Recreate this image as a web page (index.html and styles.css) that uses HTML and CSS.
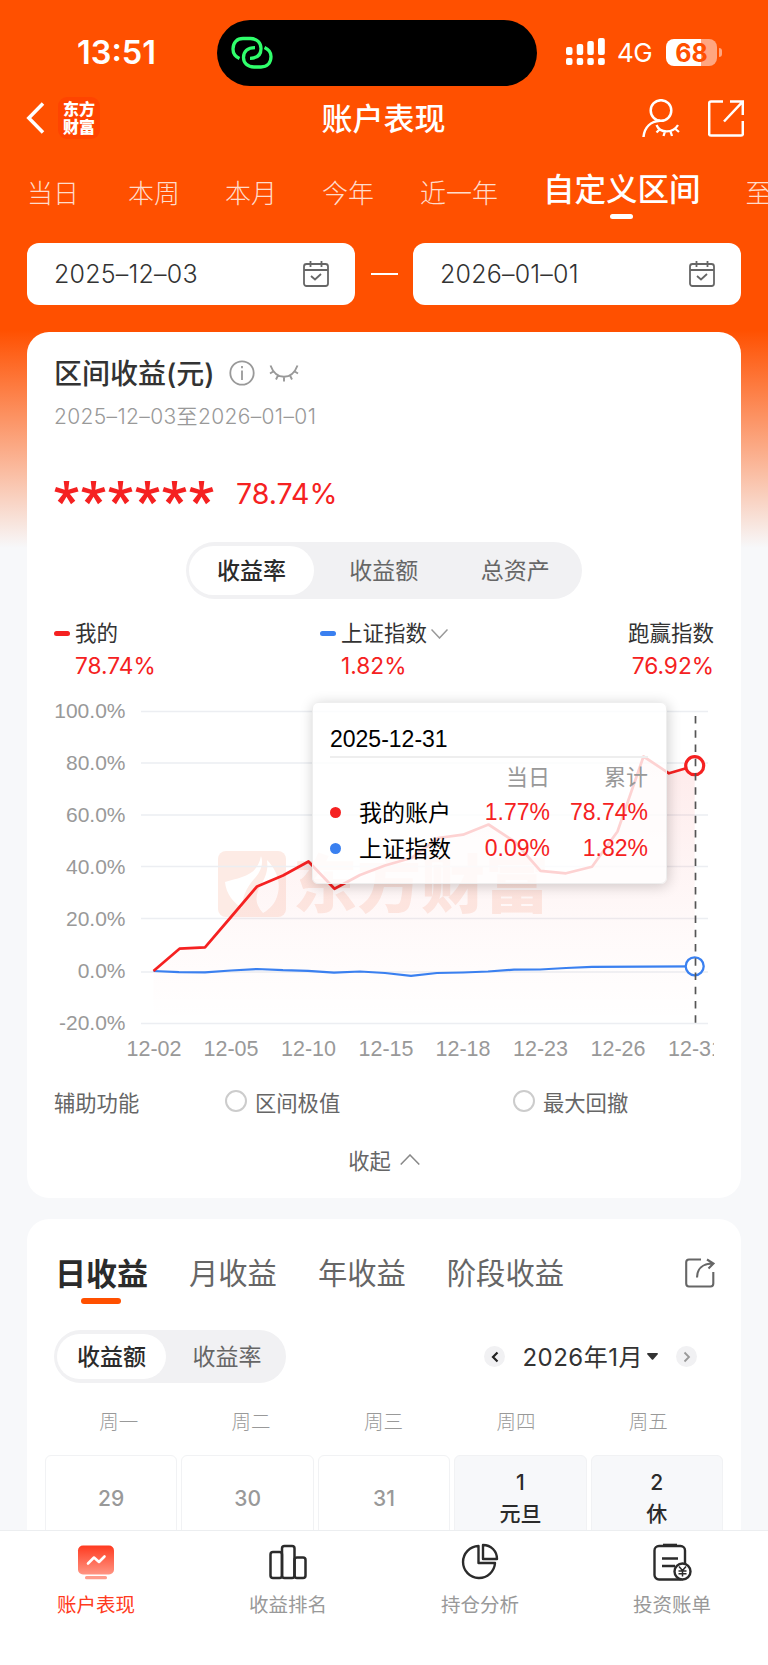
FILE: index.html
```html
<!DOCTYPE html>
<html lang="zh-CN">
<head>
    <meta charset="UTF-8">
    <meta name="viewport" content="width=device-width, initial-scale=1.0">
    <title>账户表现</title>
    <link rel="stylesheet" href="styles.css">
</head>
<body>
    <div class="page">
        <div class="content">
            <div class="status-bar">
                <div class="time">13:51</div>
                <div class="island">
                    <svg width="42" height="34" viewBox="0 0 42 34" fill="none" stroke="#30ff6c" stroke-width="3.300" stroke-linecap="butt">
                        <path d="M8.500 22.500C4 20.500 2 17 2 13C2 6.500 6 2.500 12 2.500H19.500C26 2.500 30 7 30 12.500C30 18.500 26.500 22.300 19 22.300"/>
                        <path d="M33.500 11.500C38 13.500 40 17 40 20.500C40 27 36 31 30 31H23C16.500 31 12.500 27 12.500 21.500C12.500 15.500 16.500 11.700 24 11.700"/>
                    </svg>
                </div>
                <div class="signal">
                    <svg width="39" height="28" viewBox="0 0 39 28" fill="#fff">
                        <rect x="0" y="9" width="6.500" height="8" rx="2"/>
                        <rect x="10.700" y="6" width="6.500" height="11" rx="2"/>
                        <rect x="21.300" y="3" width="6.500" height="14" rx="2"/>
                        <rect x="32" y="0" width="6.800" height="17" rx="2"/>
                        <rect x="0" y="20" width="6.500" height="7" rx="2"/>
                        <rect x="10.700" y="20" width="6.500" height="7" rx="2"/>
                        <rect x="21.300" y="20" width="6.500" height="7" rx="2"/>
                        <rect x="32" y="20" width="6.800" height="7" rx="2"/>
                    </svg>
                </div>
                <div class="network">4G</div>
                <div class="battery">68</div>
                <div class="battery-cap"></div>
            </div>

            <div class="nav-bar">
                <div class="nav-side">
                    <svg width="19" height="32" viewBox="0 0 19 32" fill="none" stroke="#fff" stroke-width="3.500"><path d="M17 1.500L2.800 16L17 30.500"/></svg>
                    <div class="brand">东方<br>财富</div>
                </div>
                <h1>账户表现</h1>
                <div class="nav-side nav-right">
                    <svg width="38" height="38" viewBox="0 0 38 38" fill="none" stroke="#fff" stroke-width="2.500">
                        <circle cx="19" cy="11.500" r="10.300"/>
                        <path d="M1.500 38C2.500 28 9 22.500 18 21.800"/>
                        <path d="M14.500 26C18 34.500 31 34.500 36 26M17.500 30.500L14.500 33.500M23 32.500L21.500 37M28.500 32.500L30 37M33.500 30L37 33" stroke-width="2.300"/>
                    </svg>
                    <svg width="36" height="37" viewBox="0 0 36 37" fill="none" stroke="#fff" stroke-width="2.500">
                        <path d="M15 1.500H3Q1.200 1.500 1.200 3.300V34Q1.200 35.500 3 35.500H33Q34.800 35.500 34.800 34V21M22 1.500H34.800V15M34 2.300L16 21.500"/>
                    </svg>
                </div>
            </div>

            <div class="range-tabs">
                <span>当日</span>
                <span>本周</span>
                <span>本月</span>
                <span>今年</span>
                <span class="wide">近一年</span>
                <span class="active">自定义区间</span>
                <span>至今</span>
            </div>

            <div class="date-row">
                <div class="date-box">
                    <span>2025–12–03</span>
                    <svg width="26" height="26" viewBox="0 0 26 26" fill="none" stroke="#666" stroke-width="1.800">
                        <rect x="1" y="3" width="24" height="22" rx="2.500"/>
                        <path d="M1 9H25M7.500 0V6M18.500 0V6M8 15L12 18.500L18 13"/>
                    </svg>
                </div>
                <div class="date-dash"></div>
                <div class="date-box">
                    <span>2026–01–01</span>
                    <svg width="26" height="26" viewBox="0 0 26 26" fill="none" stroke="#666" stroke-width="1.800">
                        <rect x="1" y="3" width="24" height="22" rx="2.500"/>
                        <path d="M1 9H25M7.500 0V6M18.500 0V6M8 15L12 18.500L18 13"/>
                    </svg>
                </div>
            </div>

            <div class="card profit-card">
                <div class="card-title">
                    <h2>区间收益(元)</h2>
                    <svg width="26" height="26" viewBox="0 0 26 26" fill="none" stroke="#999" stroke-width="1.800">
                        <circle cx="13" cy="13" r="11.700"/>
                        <path d="M13 10.500V20M13 6V8.300"/>
                    </svg>
                    <svg class="eye" width="30" height="17" viewBox="0 0 30 17" fill="none" stroke="#999" stroke-width="1.900">
                        <path d="M1.500 0.500C7 15.500 23 15.500 28.500 0.500M5 6L1 8.500M9.500 9.500L7 14.500M15 11.500V16.500M20.500 9.500L23 14.500M25 6L29 8.500"/>
                    </svg>
                </div>
                <div class="period">2025–12–03至2026–01–01</div>
                <div class="amount">
                    <div class="stars">
                        <svg width="160" height="24" viewBox="0 0 160 24" fill="#f52121">
                            <defs><path id="star" d="M9.700 0H15.300L14.300 8.700L23 5.900L24.500 10.500L15.800 12.800L21.300 19.800L17 23.200L12.500 15.800L8 23.200L3.700 19.800L9.200 12.800L0.500 10.500L2 5.900L10.700 8.700Z"/></defs>
                            <use href="#star"/>
                            <use href="#star" x="27"/>
                            <use href="#star" x="54"/>
                            <use href="#star" x="81"/>
                            <use href="#star" x="108"/>
                            <use href="#star" x="135"/>
                        </svg>
                    </div>
                    <span>78.74%</span>
                </div>

                <div class="segment segment-large">
                    <span class="active">收益率</span>
                    <span>收益额</span>
                    <span>总资产</span>
                </div>

                <div class="legend">
                    <div class="legend-item mine">
                        <div class="legend-name"><i class="dash red"></i>我的</div>
                        <div class="legend-value">78.74%</div>
                    </div>
                    <div class="legend-item index">
                        <div class="legend-name"><i class="dash blue"></i>上证指数
                            <svg width="17" height="10" viewBox="0 0 17 10" fill="none" stroke="#999" stroke-width="1.500"><path d="M0.500 0.500L8.500 9L16.500 0.500"/></svg>
                        </div>
                        <div class="legend-value">1.82%</div>
                    </div>
                    <div class="legend-item beat">
                        <div class="legend-name">跑赢指数</div>
                        <div class="legend-value">76.92%</div>
                    </div>
                </div>

                <div class="chart">
                    <svg class="plot" width="660" height="370" viewBox="54 695 660 370">
                        <defs>
                            <linearGradient id="area" x1="0" y1="0" x2="0" y2="1">
                                <stop offset="0" stop-color="#f52121" stop-opacity="0.090"/>
                                <stop offset="0.700" stop-color="#f52121" stop-opacity="0.020"/>
                                <stop offset="1" stop-color="#f52121" stop-opacity="0"/>
                            </linearGradient>
                        </defs>
                        <g class="watermark">
                            <rect x="218" y="851" width="68" height="66" rx="8"/>
                            <path class="mark-cut" d="M225 882C240 877 257 877 261 856C264 864 260 873 254 879C246 888 242 898 242 908C234 903 226 894 225 882ZM267 860C275 868 281 880 278 893C276 903 270 909 263 913C253 902 256 893 262 883C267 874 268 868 267 860Z"/>
                            <text x="293" y="907" textLength="256" lengthAdjust="spacingAndGlyphs">东方财富</text>
                        </g>
                        <path class="grid" d="M141 711.500H708M141 763H708M141 815H708M141 866.500H708M141 918.500H708M141 972H708M141 1023.500H708"/>
                        <path fill="url(#area)" d="M153.500 971L179.500 948.700L205 947.300L231 917L257 886.500L283 875.500L308.500 861.500L334.500 888.800L360 875L385 865.500L412 857.700L438 838L463 834.700L488.500 824.500L515 842L540.500 870.800L566 873.300L592 866.700L617.500 831.500L643.500 756.500L669 773.300L694.700 765.700V1023H153.500Z"/>
                        <path class="line blue-line" d="M153.500 971L179 972.200L205 972.300L231 970.500L257 969L283 970.200L308 970.800L334 972.700L360 971.500L385 973L411 975.800L437 973L463 972.500L488 971.500L514 969.600L540 969.500L566 968L592 966.800L695 966.300"/>
                        <path class="line red-line" d="M153.500 971L179.500 948.700L205 947.300L231 917L257 886.500L283 875.500L308.500 861.500L334.500 888.800L360 875L385 865.500L412 857.700L438 838L463 834.700L488.500 824.500L515 842L540.500 870.800L566 873.300L592 866.700L617.500 831.500L643.500 756.500L669 773.300L694.700 765.700"/>
                        <circle cx="694.700" cy="765.700" r="9" fill="#fff" stroke="#f52121" stroke-width="3.200"/>
                        <circle cx="694.700" cy="966.300" r="9" fill="#fff" stroke="#3a80f0" stroke-width="2.300"/>
                        <path d="M695.500 716V1024" stroke="#555" stroke-width="1.700" stroke-dasharray="7.500 6.750"/>
                        <g class="axis y-axis">
                            <text x="125.500" y="717.500">100.0%</text>
                            <text x="125.500" y="769.500">80.0%</text>
                            <text x="125.500" y="821.500">60.0%</text>
                            <text x="125.500" y="873.500">40.0%</text>
                            <text x="125.500" y="925.500">20.0%</text>
                            <text x="125.500" y="978">0.0%</text>
                            <text x="125.500" y="1030">-20.0%</text>
                        </g>
                        <g class="axis x-axis">
                            <text x="154" y="1055.500">12-02</text>
                            <text x="231" y="1055.500">12-05</text>
                            <text x="308.500" y="1055.500">12-10</text>
                            <text x="386" y="1055.500">12-15</text>
                            <text x="463" y="1055.500">12-18</text>
                            <text x="540.500" y="1055.500">12-23</text>
                            <text x="618" y="1055.500">12-26</text>
                            <text x="695.500" y="1055.500">12-31</text>
                        </g>
                    </svg>
                    <div class="tooltip">
                        <div class="tip-date">2025-12-31</div>
                        <div class="tip-grid">
                            <i></i><span></span><span class="tip-head">当日</span><span class="tip-head">累计</span>
                            <i class="dot red"></i><span class="tip-name">我的账户</span><b>1.77%</b><b>78.74%</b>
                            <i class="dot blue"></i><span class="tip-name">上证指数</span><b>0.09%</b><b>1.82%</b>
                        </div>
                    </div>
                </div>

                <div class="helpers">
                    <span class="helpers-label">辅助功能</span>
                    <span class="option"><i></i>区间极值</span>
                    <span class="option"><i></i>最大回撤</span>
                </div>

                <div class="collapse">收起
                    <svg width="20" height="11" viewBox="0 0 20 11" fill="none" stroke="#888" stroke-width="1.500"><path d="M0.700 10.500L10 1L19.300 10.500"/></svg>
                </div>
            </div>

            <div class="card calendar-card">
                <div class="calendar-tabs">
                    <span class="active">日收益</span>
                    <span>月收益</span>
                    <span>年收益</span>
                    <span>阶段收益</span>
                    <svg width="30" height="30" viewBox="0 0 30 30" fill="none" stroke="#666" stroke-width="2.100">
                        <path d="M16 1.500H4Q1.200 1.500 1.200 4.300V25.500Q1.200 28.500 4 28.500H25.500Q28.300 28.500 28.300 25.500V14M12 19.500C12 11.500 17 5.500 28 5.500M22 1.500L28.500 5.500L23.500 10.500"/>
                    </svg>
                </div>
                <div class="calendar-tools">
                    <div class="segment segment-small">
                        <span class="active">收益额</span>
                        <span>收益率</span>
                    </div>
                    <div class="month-picker">
                        <i class="arrow"><svg width="8" height="12" viewBox="0 0 8 12" fill="none" stroke="#222" stroke-width="2.200"><path d="M6.500 1.500L2 6L6.500 10.500"/></svg></i>
                        <span class="month">2026年1月</span>
                        <svg class="caret" width="11" height="7" viewBox="0 0 11 7" fill="#333"><path d="M0 1Q0 0 1 0H10Q11 0 11 1L6.200 6.500Q5.500 7 4.800 6.500Z"/></svg>
                        <i class="arrow"><svg width="8" height="12" viewBox="0 0 8 12" fill="none" stroke="#999" stroke-width="1.800"><path d="M1.500 1.500L6 6L1.500 10.500"/></svg></i>
                    </div>
                </div>
                <div class="weekdays">
                    <span>周一</span><span>周二</span><span>周三</span><span>周四</span><span>周五</span>
                </div>
                <div class="days">
                    <div class="day">29</div>
                    <div class="day">30</div>
                    <div class="day">31</div>
                    <div class="day rest">1<span>元旦</span></div>
                    <div class="day rest">2<span>休</span></div>
                </div>
            </div>
        </div>

        <div class="tab-bar">
            <div class="tab-item active">
                <svg width="40" height="40" viewBox="0 0 40 40">
                    <defs>
                        <linearGradient id="screen" x1="0" y1="0" x2="0" y2="1">
                            <stop offset="0" stop-color="#ff3a20"/>
                            <stop offset="1" stop-color="#ff9583"/>
                        </linearGradient>
                    </defs>
                    <rect x="2" y="3.500" width="36" height="29" rx="5" fill="url(#screen)"/>
                    <rect x="9" y="34" width="22" height="3.200" rx="1.500" fill="#ff9c8c"/>
                    <path d="M12 21.500L18 15.500L23 20L28.500 14.500" fill="none" stroke="#fff" stroke-width="2.600" stroke-linecap="round" stroke-linejoin="round"/>
                </svg>
                <span>账户表现</span>
            </div>
            <div class="tab-item">
                <svg width="40" height="40" viewBox="0 0 40 40" fill="none" stroke="#2b2b2b" stroke-width="2.500">
                    <rect x="2.500" y="10" width="11.500" height="26" rx="2.500"/>
                    <rect x="14" y="4" width="12.500" height="32" rx="2.500"/>
                    <rect x="26.500" y="15.500" width="11" height="20.500" rx="2.500"/>
                </svg>
                <span>收益排名</span>
            </div>
            <div class="tab-item">
                <svg width="40" height="40" viewBox="0 0 40 40" fill="none" stroke="#2b2b2b" stroke-width="2.400" stroke-linejoin="round">
                    <path d="M18.500 4A16 16 0 1 0 35 21H18.500Z"/>
                    <path d="M23 3C31 3 37 9 37 17H23Z"/>
                </svg>
                <span>持仓分析</span>
            </div>
            <div class="tab-item">
                <svg width="40" height="40" viewBox="0 0 40 40" fill="none" stroke="#2b2b2b" stroke-width="2.400">
                    <rect x="2.500" y="4" width="30.500" height="33.500" rx="4.500"/>
                    <path d="M11 3.200H25" stroke-width="3"/>
                    <path d="M10 16.500H26M10 24H23" stroke-width="2.500"/>
                    <circle cx="30.500" cy="29.500" r="8" fill="#fff"/>
                    <path d="M27 24.500L30.500 28.500L34 24.500M26.500 29H34.500M26.500 31.800H34.500M30.500 28.500V34.500" stroke-width="1.500"/>
                </svg>
                <span>投资账单</span>
            </div>
        </div>
    </div>
</body>
</html>
```
FILE: styles.css
```css
* {
    box-sizing: border-box;
}
body {
    margin: 0;
    font-family: Inter, "Noto Sans CJK SC", sans-serif;
    background-color: #f7f8fa;
    color: #333;
}
h1, h2 {
    margin: 0;
}
i, b {
    font-style: normal;
    font-weight: normal;
}
svg {
    display: block;
    flex-shrink: 0;
}
.page {
    display: flex;
    flex-direction: column;
    width: 768px;
    height: 1665px;
    overflow: hidden;
    background: linear-gradient(#ff5000 0, #ff5000 330px, #fbaa86 448px, #f7f8fa 548px);
}
.content {
    flex: 1;
    min-height: 0;
    overflow: hidden;
}

/* status bar */
.status-bar {
    display: flex;
    align-items: center;
    height: 86px;
    padding-top: 20px;
    color: #fff;
}
.time {
    width: 217px;
    padding-left: 77px;
    padding-bottom: 2px;
    font-size: 32.500px;
    font-weight: 600;
}
.island {
    display: flex;
    align-items: center;
    width: 320px;
    height: 66px;
    padding-left: 14px;
    border-radius: 33px;
    background: #000;
}
.signal {
    margin-left: 29px;
    margin-top: -2px;
}
.network {
    width: 36px;
    margin-left: 12px;
    margin-top: -1px;
    font-size: 26px;
    letter-spacing: -0.500px;
}
.battery {
    width: 51px;
    height: 27px;
    margin-left: 13px;
    margin-top: -2px;
    border-radius: 8px;
    background: linear-gradient(90deg, #fff 68%, #ffa680 68%);
    color: #ff5000;
    font-size: 25px;
    font-weight: 700;
    line-height: 28px;
    text-align: center;
}
.battery-cap {
    width: 3px;
    height: 9px;
    margin-left: 2px;
    margin-top: -2px;
    border-radius: 0 3px 3px 0;
    background: #ffa680;
}

/* navigation */
.nav-bar {
    display: flex;
    align-items: center;
    height: 64px;
    padding: 0 24px 0 26px;
    color: #fff;
}
.nav-side {
    display: flex;
    align-items: center;
    gap: 13px;
    width: 160px;
}
.nav-right {
    justify-content: flex-end;
    gap: 28px;
}
.brand {
    width: 42px;
    height: 42px;
    padding-top: 4px;
    border-radius: 9px;
    background: #ff4400;
    font-size: 16px;
    font-weight: 900;
    line-height: 17.500px;
    text-align: center;
}
.nav-bar h1 {
    flex: 1;
    padding: 0 3px 4px 0;
    font-size: 31px;
    font-weight: 500;
    text-align: center;
}
.range-tabs {
    display: flex;
    align-items: center;
    gap: 45px;
    height: 93px;
    padding: 0 0 11px 27px;
    overflow: hidden;
    white-space: nowrap;
    color: #ffdccc;
    font-size: 26px;
    font-weight: 300;
}
.range-tabs span:first-child {
    margin-right: 4px;
}
.range-tabs .wide {
    margin-left: 1px;
}
.range-tabs .active {
    position: relative;
    top: -4px;
    color: #fff;
    font-size: 31.500px;
    font-weight: 500;
}
.range-tabs .active::after {
    content: "";
    position: absolute;
    left: 50%;
    bottom: -9px;
    width: 23px;
    height: 5px;
    margin-left: -12px;
    border-radius: 3px;
    background: #fff;
}
.date-row {
    display: flex;
    align-items: center;
    justify-content: space-between;
    padding: 0 27px;
    margin-bottom: 27px;
}
.date-box {
    display: flex;
    align-items: center;
    justify-content: space-between;
    width: 328px;
    height: 62px;
    padding: 0 26px 0 27px;
    border-radius: 12px;
    background: #fff;
    font-size: 25px;
    font-weight: 350;
    letter-spacing: 0.200px;
}
.date-dash {
    width: 27px;
    height: 2px;
    background: #fff;
}

/* profit card */
.card {
    margin: 0 27px;
    padding: 0 27px;
    border-radius: 22px;
    background: #fff;
}
.profit-card {
    height: 866px;
    margin-bottom: 21px;
}
.card-title {
    display: flex;
    align-items: center;
    height: 82px;
}
.card-title h2 {
    margin-right: 14px;
    padding-bottom: 2px;
    font-size: 28px;
    font-weight: 500;
}
.card-title .eye {
    margin-left: 14px;
}
.period {
    height: 30px;
    margin-top: -12px;
    color: #999;
    font-size: 21px;
    font-weight: 350;
    line-height: 30px;
    letter-spacing: 0.350px;
}
.amount {
    display: flex;
    align-items: center;
    height: 60px;
    margin-top: 31px;
    color: #f52121;
    font-size: 28.500px;
}
.stars {
    margin-right: 22px;
}
.segment {
    display: flex;
    border-radius: 29px;
    background: #f1f1f3;
    color: #666;
    font-size: 23px;
}
.segment span {
    display: flex;
    align-items: center;
    justify-content: center;
    flex: 1;
    padding-bottom: 3px;
}
.segment .active {
    border-radius: 25px;
    background: #fff;
    color: #2b2b2b;
    font-weight: 500;
}
.segment-large {
    width: 396px;
    height: 57px;
    margin: 19px auto 0;
    padding: 4px 1px 4px 3px;
}
.segment-large .active {
    flex: none;
    width: 125px;
    margin-right: 4px;
}
.segment-small {
    width: 232px;
    height: 53px;
    padding: 4px 3px;
}
.segment-small .active {
    flex: none;
    width: 109px;
    margin-right: 5px;
}
.legend {
    display: flex;
    height: 96px;
    padding-top: 16px;
    font-size: 21.500px;
}
.legend-name {
    display: flex;
    align-items: center;
    height: 33px;
}
.legend-name i, .legend-name svg {
    position: relative;
    top: 2px;
}
.legend-name svg {
    margin-left: 4px;
}
.legend-value {
    height: 34px;
    margin-top: 2px;
    color: #f52121;
    font-size: 22.700px;
    line-height: 32px;
}
.mine {
    width: 266px;
}
.mine .legend-value, .index .legend-value {
    padding-left: 21px;
}
.beat {
    margin-left: auto;
    text-align: right;
}
.dash {
    width: 16px;
    height: 5px;
    margin-right: 5px;
    border-radius: 3px;
}
.red {
    background: #f52121;
}
.blue {
    background: #3a80f0;
}

/* chart */
.chart {
    position: relative;
}
.grid {
    stroke: #eceef2;
    stroke-width: 1.300;
    fill: none;
}
.watermark {
    fill: #fdebe5;
    font-family: "Noto Sans CJK SC", sans-serif;
    font-size: 63px;
    font-weight: 900;
}
.mark-cut {
    fill: #fff;
}
.line {
    fill: none;
    stroke-width: 2.200;
    stroke-linejoin: round;
}
.red-line {
    stroke: #f52121;
    stroke-width: 2.700;
}
.blue-line {
    stroke: #3a80f0;
}
.axis {
    fill: #999;
    font-family: "Liberation Sans", sans-serif;
    font-size: 21.500px;
}
.y-axis {
    font-size: 21px;
    text-anchor: end;
}
.x-axis {
    text-anchor: middle;
}
.tooltip {
    position: absolute;
    left: 258px;
    top: 7px;
    width: 355px;
    height: 182px;
    padding: 17px 18px 17px 17px;
    border: 1px solid #eee;
    border-radius: 6px;
    background: rgba(255, 255, 255, 0.800);
    box-shadow: 1px 2px 14px rgba(0, 0, 0, 0.200);
    color: #000;
    font-family: "Liberation Sans", "Noto Sans CJK SC", sans-serif;
    font-size: 23px;
}
.tip-date {
    height: 38px;
    border-bottom: 2px solid #eee;
    line-height: 38px;
}
.tip-grid {
    display: grid;
    grid-template-columns: 29px 92px 1fr 98px;
    grid-template-rows: 36px 36px 36px;
    align-items: center;
    text-align: right;
}
.tip-head {
    padding-bottom: 3px;
    color: #999;
    font-size: 22px;
}
.tip-grid b {
    color: #f52121;
}
.tip-name {
    padding-bottom: 2px;
    text-align: left;
    white-space: nowrap;
}
.dot {
    width: 11px;
    height: 11px;
    border-radius: 50%;
}
.helpers {
    display: flex;
    align-items: center;
    height: 72px;
    color: #666;
    font-size: 21.300px;
}
.helpers-label {
    flex: none;
    width: 171px;
}
.option {
    display: flex;
    align-items: center;
    flex: none;
    width: 288px;
}
.option:last-child {
    width: auto;
}
.option i {
    width: 22px;
    height: 22px;
    margin-right: 8px;
    border: 2px solid #ccc;
    border-radius: 50%;
}
.collapse {
    display: flex;
    align-items: center;
    justify-content: center;
    gap: 9px;
    height: 45px;
    color: #666;
    font-size: 21.300px;
}

/* calendar card */
.calendar-card {
    height: 420px;
}
.calendar-tabs {
    display: flex;
    align-items: center;
    height: 111px;
    padding: 0 0 7px 1px;
    color: #666;
    font-size: 29.300px;
}
.calendar-tabs span {
    margin-right: 41px;
}
.calendar-tabs .active {
    position: relative;
    color: #2b2b2b;
    font-size: 31px;
    font-weight: 700;
}
.calendar-tabs .active::after {
    content: "";
    position: absolute;
    left: 26px;
    bottom: -10px;
    width: 40px;
    height: 6px;
    border-radius: 3px;
    background: #ff5000;
}
.calendar-tabs svg {
    position: relative;
    top: 2px;
    margin-left: auto;
    margin-right: -1px;
}
.calendar-tools {
    display: flex;
    justify-content: space-between;
    height: 53px;
}
.month-picker {
    display: flex;
    align-items: center;
    padding-right: 17px;
    font-size: 24px;
    letter-spacing: 0.500px;
}
.arrow {
    display: flex;
    align-items: center;
    justify-content: center;
    width: 21px;
    height: 21px;
    border-radius: 50%;
    background: #f1f1f3;
}
.month {
    margin: 0 4px 0 17px;
    padding-bottom: 2px;
}
.caret {
    margin-right: 18px;
}
.weekdays {
    display: flex;
    height: 72px;
    margin: 0 -1px;
    padding-top: 7px;
    color: #999;
    font-size: 19.500px;
    font-weight: 300;
    line-height: 64px;
}
.weekdays span {
    flex: 1;
    padding-right: 1px;
    text-align: center;
}
.days {
    display: flex;
    gap: 4px;
    margin: 0 -9px;
}
.day {
    display: flex;
    flex-direction: column;
    align-items: center;
    justify-content: center;
    flex: 1;
    height: 87px;
    border: 1px solid #f1f2f4;
    border-radius: 6px 6px 0 0;
    color: #999;
    font-size: 21px;
    font-weight: 500;
}
.rest {
    justify-content: flex-start;
    padding-top: 11px;
    background: #f7f8fa;
    color: #2b2b2b;
    line-height: 31px;
}

/* bottom tab bar */
.tab-bar {
    display: flex;
    height: 135px;
    border-top: 1px solid #eceef0;
    background: #fff;
}
.tab-item {
    display: flex;
    flex-direction: column;
    align-items: center;
    flex: 1;
    padding-top: 11px;
    color: #999;
    font-size: 19.500px;
}
.tab-item span {
    margin-top: 8px;
    line-height: 30px;
}
.tab-item.active {
    color: #ff3a20;
}
```
